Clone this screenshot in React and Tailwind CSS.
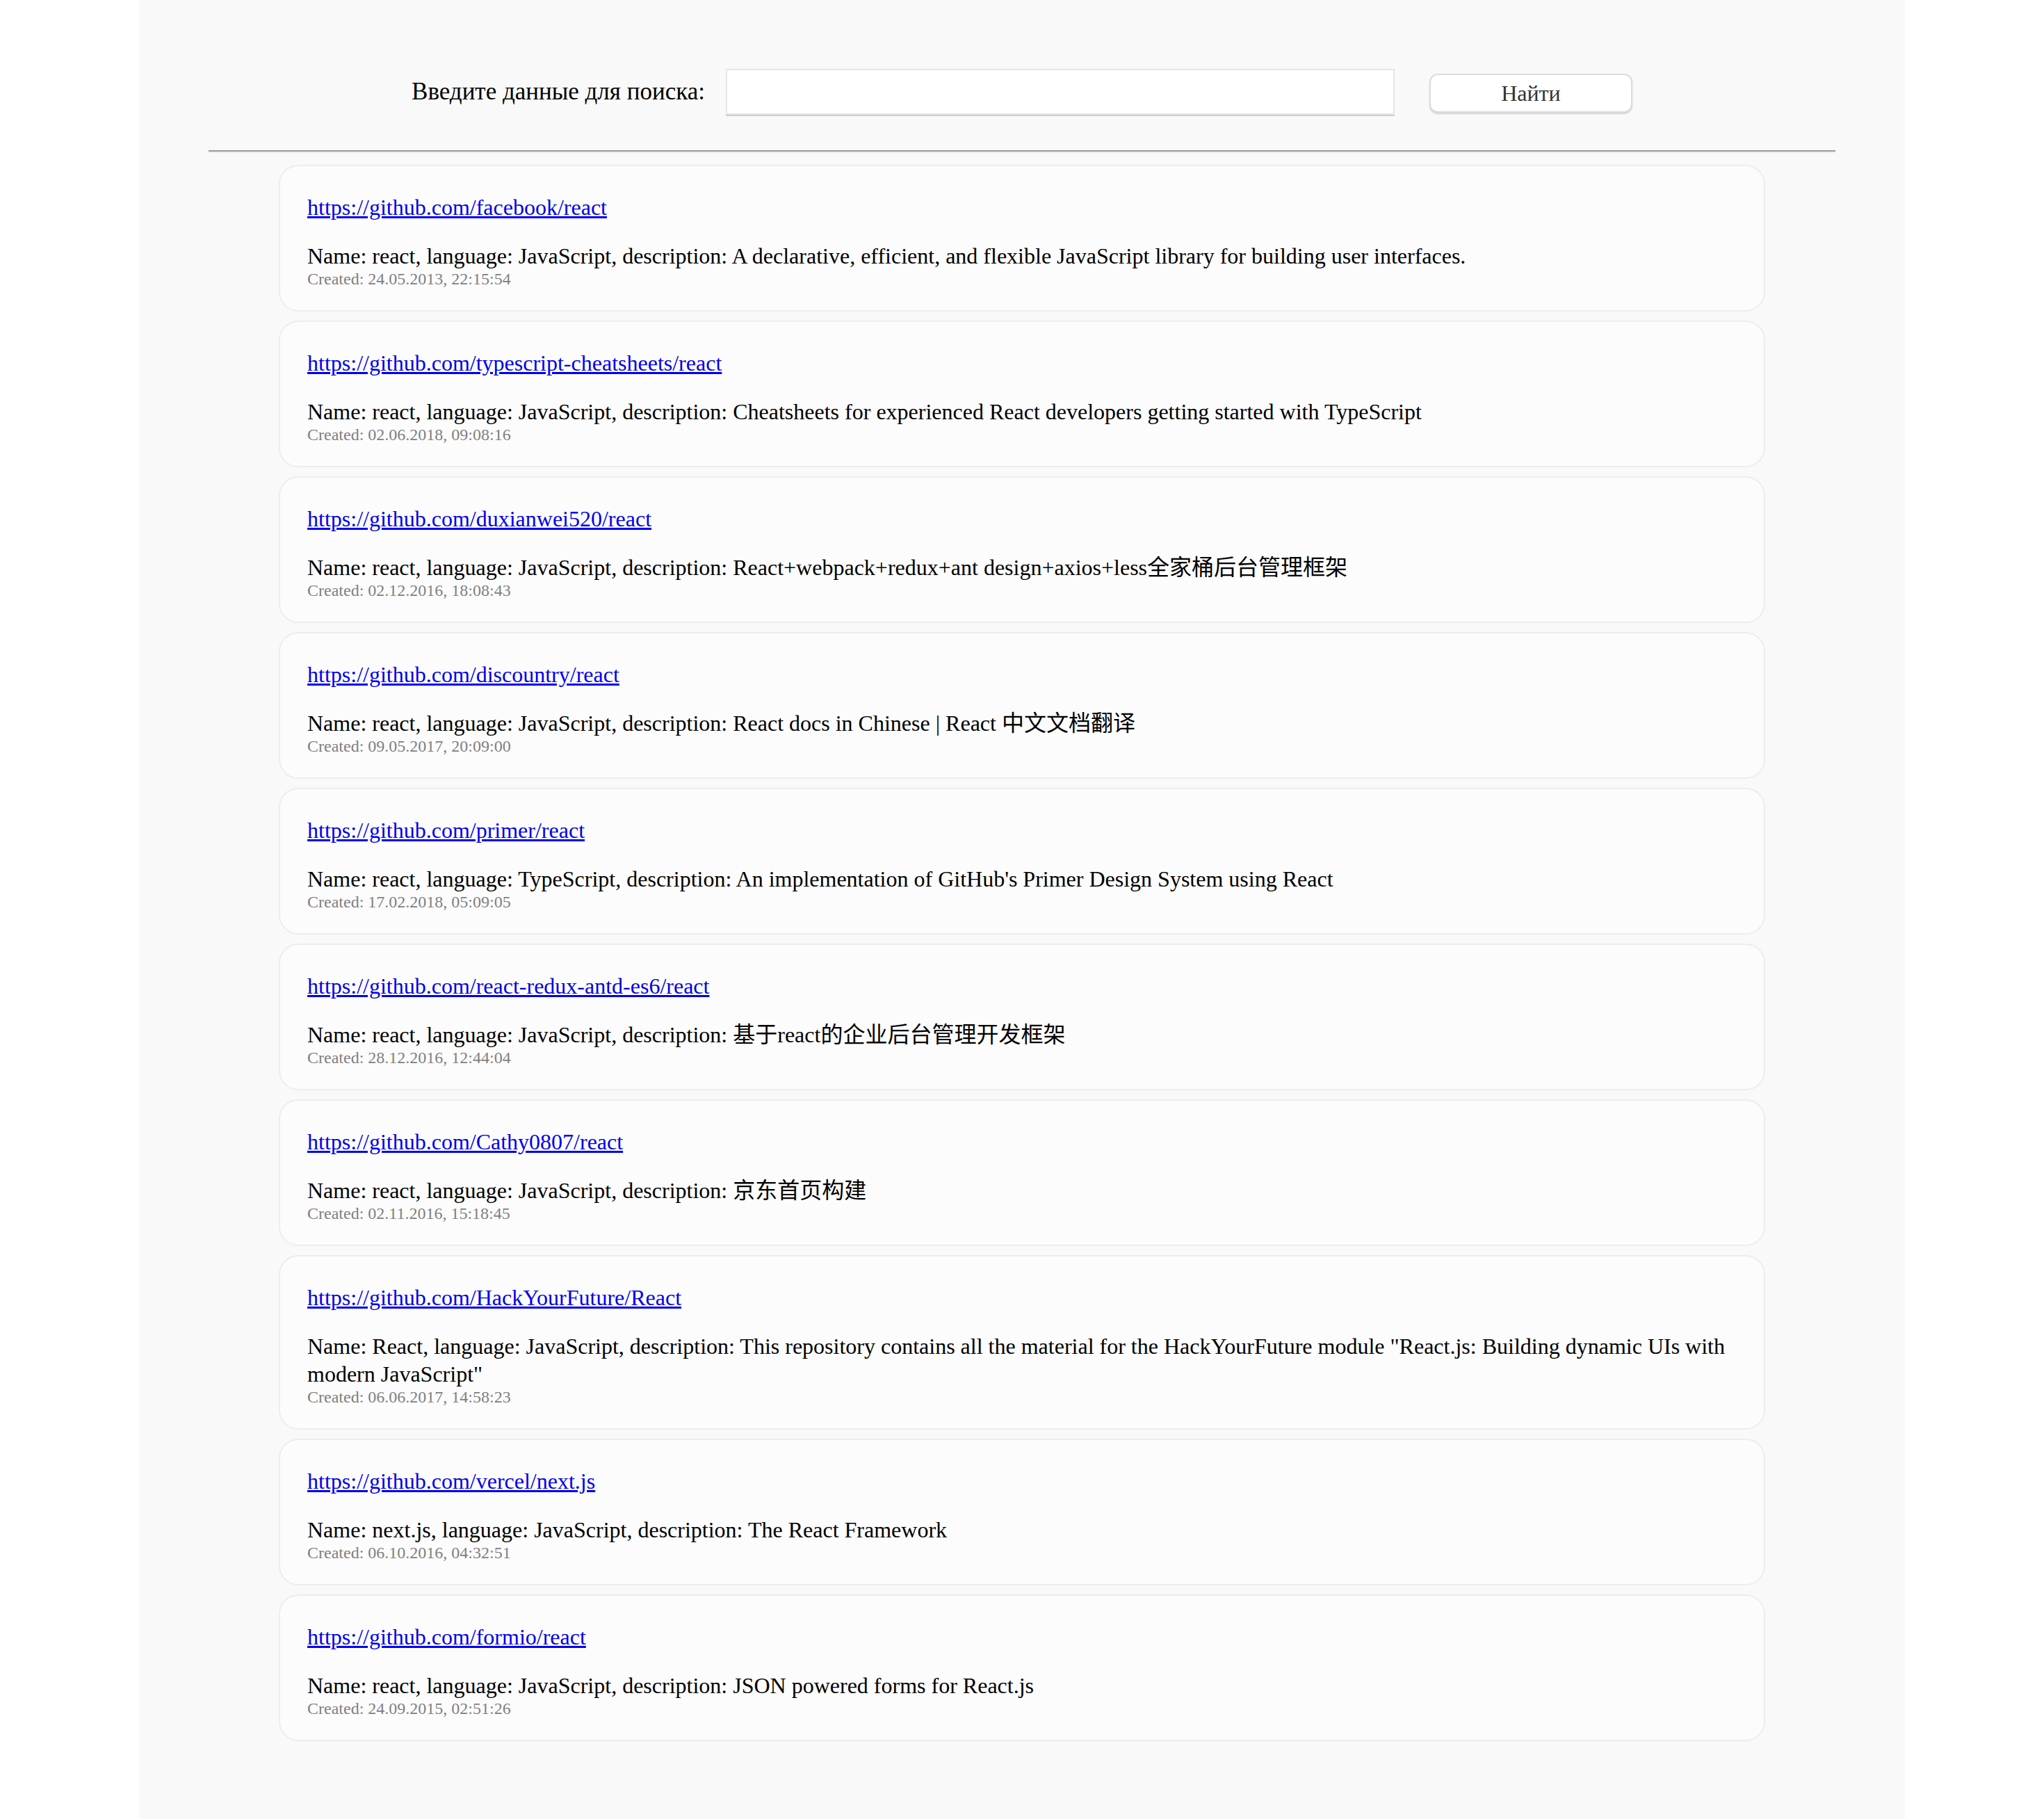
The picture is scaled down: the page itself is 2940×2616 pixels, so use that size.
import React from "react";

const repos = [
  { url: "https://github.com/facebook/react", name: "react", lang: "JavaScript", desc: "A declarative, efficient, and flexible JavaScript library for building user interfaces.", created: "24.05.2013, 22:15:54" },
  { url: "https://github.com/typescript-cheatsheets/react", name: "react", lang: "JavaScript", desc: "Cheatsheets for experienced React developers getting started with TypeScript", created: "02.06.2018, 09:08:16" },
  { url: "https://github.com/duxianwei520/react", name: "react", lang: "JavaScript", desc: "React+webpack+redux+ant design+axios+less全家桶后台管理框架", created: "02.12.2016, 18:08:43" },
  { url: "https://github.com/discountry/react", name: "react", lang: "JavaScript", desc: "React docs in Chinese | React 中文文档翻译", created: "09.05.2017, 20:09:00" },
  { url: "https://github.com/primer/react", name: "react", lang: "TypeScript", desc: "An implementation of GitHub's Primer Design System using React", created: "17.02.2018, 05:09:05" },
  { url: "https://github.com/react-redux-antd-es6/react", name: "react", lang: "JavaScript", desc: "基于react的企业后台管理开发框架", created: "28.12.2016, 12:44:04" },
  { url: "https://github.com/Cathy0807/react", name: "react", lang: "JavaScript", desc: "京东首页构建", created: "02.11.2016, 15:18:45" },
  { url: "https://github.com/HackYourFuture/React", name: "React", lang: "JavaScript", desc: "This repository contains all the material for the HackYourFuture module \"React.js: Building dynamic UIs with modern JavaScript\"", created: "06.06.2017, 14:58:23" },
  { url: "https://github.com/vercel/next.js", name: "next.js", lang: "JavaScript", desc: "The React Framework", created: "06.10.2016, 04:32:51" },
  { url: "https://github.com/formio/react", name: "react", lang: "JavaScript", desc: "JSON powered forms for React.js", created: "24.09.2015, 02:51:26" },
];

function Card({ r }) {
  return (
    <div className="w-[2138px] mx-auto rounded-[28px] border-2 border-[#ededed] bg-[#fcfcfc] pt-[39px] pb-[32px] pl-[39px] pr-[38px]">
      <div className="text-[32px] leading-[40px]">
        <a href={r.url} className="text-[#0000ee] underline">{r.url}</a>
      </div>
      <p className="mt-[30px] text-[32px] leading-[40px] text-black">
        Name: {r.name}, language: {r.lang}, description: {r.desc}
      </p>
      <div className="text-[24px] leading-[26px] text-[#808080]">Created: {r.created}</div>
    </div>
  );
}

export default function App() {
  return (
    <div className="min-h-[2616px] bg-white font-['Liberation_Serif','Noto_Sans_CJK_SC',serif]">
      <div className="mx-auto w-[2540px] min-h-[2616px] bg-[#f9f9f9] pb-[113px]">
        <div className="flex items-center justify-center pt-[99px]">
          <label className="text-[35px] leading-[40px] text-black mr-[30px]">Введите данные для поиска:</label>
          <input
            type="text"
            className="w-[962px] h-[66px] bg-white border-2 border-[#e6e6e6] shadow-[0_2px_0_#cfcfcf] outline-none px-3 text-[32px]"
          />
          <button className="ml-[50px] mt-[4px] w-[292px] h-[56px] rounded-[12px] bg-white border-2 border-[#dcdcdc] shadow-[0_2px_2px_rgba(0,0,0,0.15)] text-[32px] leading-[40px] text-[#333]">
            Найти
          </button>
        </div>
        <hr className="mx-[100px] mt-[51px] border-0 border-t-2 border-b-2 border-t-[#999999] border-b-[#ececec]" />
        <div className="mt-[17px] flex flex-col gap-[13px]">
          {repos.map((r) => (
            <Card key={r.url} r={r} />
          ))}
        </div>
      </div>
    </div>
  );
}
